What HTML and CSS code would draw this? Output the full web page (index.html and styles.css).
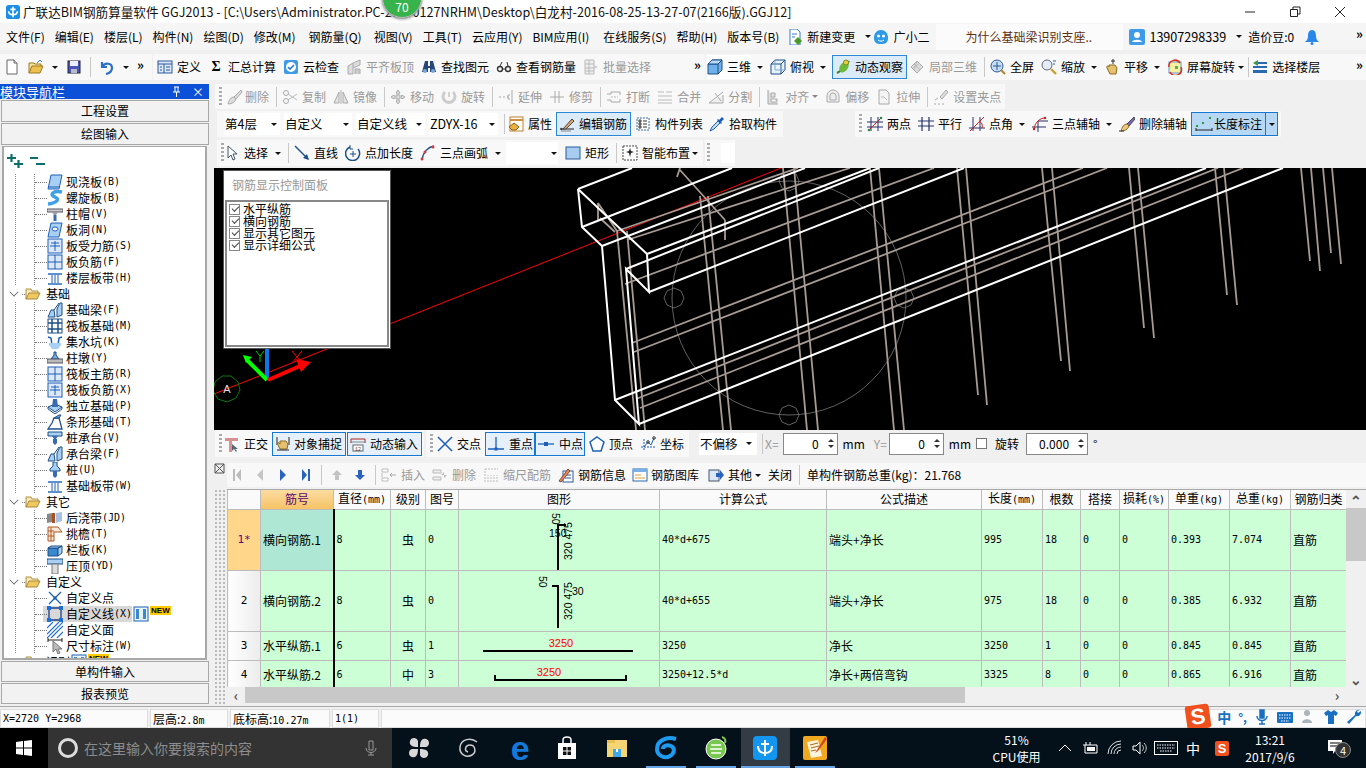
FILE: index.html
```html
<!DOCTYPE html>
<html lang="zh-CN">
<head>
<meta charset="utf-8">
<title>广联达BIM钢筋算量软件 GGJ2013</title>
<link rel="stylesheet" href="styles.css">
</head>
<body>
<svg class="defs" aria-hidden="true">
<symbol id="app" viewBox="0 0 16 16"><rect width="16" height="16" rx="3" fill="#1b8fe8"/><path d="M8 2v12M3 7c0 3 2 4 5 4s5-1 5-4M5 5h6" fill="none" stroke="#fff" stroke-width="1.8"/></symbol>
<symbol id="new" viewBox="0 0 16 16"><path d="M3 1h7l3 3v11H3z" fill="#fff" stroke="#666"/><path d="M10 1v3h3" fill="#ddd" stroke="#666"/></symbol>
<symbol id="open" viewBox="0 0 16 16"><path d="M1 14V4h5l1 1h6v2" fill="#f5e0a0" stroke="#9a7a20"/><path d="M1 14l3-7h11l-3 7z" fill="#edc050" stroke="#9a7a20"/><path d="M9 4l3-3 2 2" fill="none" stroke="#3a7ac8"/></symbol>
<symbol id="save" viewBox="0 0 16 16"><rect x="2" y="2" width="12" height="12" fill="#4a55b8" stroke="#223"/><rect x="4" y="2" width="8" height="5" fill="#eef"/><rect x="5" y="10" width="6" height="4" fill="#bbc"/></symbol>
<symbol id="undo" viewBox="0 0 16 16"><path d="M3 3v5h5M3 8c3-5 10-4 10 1 0 3-2 5-6 6" fill="none" stroke="#2a6fc8" stroke-width="2.2"/></symbol>
<symbol id="def" viewBox="0 0 16 16"><rect x="1" y="2" width="14" height="12" fill="#dce8f8" stroke="#2a5a98"/><path d="M1 5h14M7 5v9M3 8h2M3 11h2M9 8h4M9 11h4" stroke="#2a5a98" fill="none"/></symbol>
<symbol id="cloud" viewBox="0 0 16 16"><rect x="1" y="1" width="14" height="14" rx="2" fill="#3f9be8"/><circle cx="8" cy="8" r="5" fill="#fff"/><path d="M5 8l2 2 4-4" fill="none" stroke="#2a7cd0" stroke-width="1.6"/></symbol>
<symbol id="flush" viewBox="0 0 16 16"><path d="M2 15V7l5-3v11zM7 4l7-3v5l-7 3" fill="#ddd" stroke="#aaa"/><path d="M9 15v-5h5v5" fill="#ccc" stroke="#aaa"/></symbol>
<symbol id="bino" viewBox="0 0 16 16"><path d="M4 2h3v5h2V2h3l3 11H9V9H7v4H1z" fill="#27467a"/><circle cx="4" cy="12" r="2" fill="#7aa8e0"/><circle cx="12" cy="12" r="2" fill="#7aa8e0"/></symbol>
<symbol id="glass" viewBox="0 0 16 16"><circle cx="4" cy="10" r="2.5" fill="none" stroke="#333" stroke-width="1.4"/><circle cx="12" cy="10" r="2.5" fill="none" stroke="#333" stroke-width="1.4"/><path d="M6.500 10h3M4 7l2-4M12 7l-1-4" stroke="#333" fill="none"/></symbol>
<symbol id="batch" viewBox="0 0 16 16"><path d="M2 1h9v14H2zM2 5h9M2 9h9M2 12h9M6 1v14" fill="#eee" stroke="#bbb"/><path d="M11 6l4 2-4 2z" fill="#ccc"/></symbol>
<symbol id="cube" viewBox="0 0 16 16"><path d="M1 5l4-4h10v10l-4 4H1z" fill="#6fb0e8" stroke="#1d4f88"/><path d="M1 5h10v10M11 5l4-4" fill="none" stroke="#1d4f88"/><path d="M1 5l4-4h10l-4 4z" fill="#b8daf5" stroke="#1d4f88"/></symbol>
<symbol id="top" viewBox="0 0 16 16"><path d="M1 5l4-4h10v10l-4 4H1z" fill="#eaf4fc" stroke="#1d4f88"/><path d="M1 5h10v10M11 5l4-4" fill="none" stroke="#1d4f88"/><path d="M5 1v10h10" fill="none" stroke="#7aa8d8"/></symbol>
<symbol id="orbit" viewBox="0 0 16 16"><path d="M2 14C6 12 12 7 14 2" fill="none" stroke="#2a8a3a" stroke-width="2"/><ellipse cx="9" cy="8" rx="4" ry="6" fill="#6fba38" transform="rotate(35 9 8)"/><circle cx="11" cy="3.500" r="2.500" fill="#e8d040" stroke="#7a8a20"/></symbol>
<symbol id="local" viewBox="0 0 16 16"><path d="M2 8l6-6 6 6-6 6z" fill="#ddd" stroke="#aaa"/><path d="M5 5l6 6M8 2l-3 9M4 9l7-5" stroke="#bbb" fill="none"/></symbol>
<symbol id="zoomall" viewBox="0 0 16 16"><circle cx="7" cy="7" r="6" fill="#c8dcf4" stroke="#2a5a98"/><path d="M7 3v8M3 7h8" stroke="#2a5a98" fill="none"/><path d="M11 11l4 4" stroke="#b08030" stroke-width="2"/></symbol>
<symbol id="zoom" viewBox="0 0 16 16"><circle cx="6" cy="6" r="5" fill="#e4eef8" stroke="#667"/><path d="M10 10l5 5" stroke="#c8a030" stroke-width="2.400"/><path d="M12 2h3M12 5h2" stroke="#2a5a98"/></symbol>
<symbol id="pan" viewBox="0 0 16 16"><path d="M3 9c-1-2 1-3 2-1V6h6l2 3-1 6H6z" fill="#e4c070" stroke="#8a6a20"/><path d="M9 0v5M7 2h4" stroke="#333" fill="none"/></symbol>
<symbol id="rot" viewBox="0 0 16 16"><rect x="2" y="3" width="12" height="11" fill="#f8f0a0" stroke="#5a9ad8"/><path d="M2 8a6 6 0 0 1 11-4M14 8a6 6 0 0 1-11 5" fill="none" stroke="#d83020" stroke-width="1.500"/><rect x="8" y="7" width="3" height="3" fill="#58b058"/></symbol>
<symbol id="layer" viewBox="0 0 16 16"><path d="M6 3h9v2H6zM1 7h14v2H1zM1 11h14v3H1z" fill="#2a6ab0"/><path d="M1 4l5-3v6z" fill="#3a9a48"/></symbol>
<symbol id="newchg" viewBox="0 0 16 16"><path d="M3 0h7l3 3v13H3z" fill="#fff" stroke="#3a7ac8"/><path d="M5 5h5M5 8h3" stroke="#3a7ac8"/><path d="M11 8l4 4-4 4-4-4z" fill="#4a9a28"/></symbol>
<symbol id="gxe" viewBox="0 0 16 16"><path d="M1 9c0-5 3-8 7-8s7 3 7 8-3 6-7 6-7-1-7-6z" fill="#2c9ae6"/><circle cx="5.500" cy="7" r="1.500" fill="#fff"/><circle cx="10.500" cy="7" r="1.500" fill="#fff"/><path d="M5 11c2 1.500 4 1.500 6 0" stroke="#fff" fill="none"/></symbol>
<symbol id="user" viewBox="0 0 16 16"><rect width="16" height="16" rx="2" fill="#3f9be8"/><circle cx="8" cy="6" r="3" fill="#fff"/><path d="M3 13c1-3 9-3 10 0z" fill="#fff"/></symbol>
<symbol id="bell" viewBox="0 0 16 16"><path d="M8 1c3 0 4 3 4 6s1 4 3 6H1c2-2 3-3 3-6s1-6 4-6z" fill="#2a86e8"/><circle cx="8" cy="14.500" r="1.500" fill="#2a86e8"/></symbol>
<symbol id="g-del" viewBox="0 0 16 16"><path d="M14 1L7 8l2 2 6-7zM7 8c-3 0-5 3-6 7 4 0 7-2 8-5z" fill="#ddd" stroke="#aaa"/></symbol>
<symbol id="g-copy" viewBox="0 0 16 16"><circle cx="4" cy="4" r="2.500" fill="none" stroke="#aaa"/><circle cx="4" cy="12" r="2.500" fill="none" stroke="#aaa"/><path d="M6 5l9 6M6 11l9-6" stroke="#bbb"/></symbol>
<symbol id="g-mir" viewBox="0 0 16 16"><path d="M8 1v14M6 3L1 14h5zM10 3l5 11h-5z" fill="#e4e4e4" stroke="#aaa"/></symbol>
<symbol id="g-move" viewBox="0 0 16 16"><path d="M8 1l2 3H9v3h3V6l3 2-3 2V9H9v3h1l-2 3-2-3h1V9H4v1L1 8l3-2v1h3V4H6z" fill="#ddd" stroke="#aaa"/></symbol>
<symbol id="g-rot" viewBox="0 0 16 16"><path d="M4 3a6 6 0 1 0 8 0" fill="none" stroke="#ccc" stroke-width="3"/><path d="M8 3v5" stroke="#aaa"/></symbol>
<symbol id="g-ext" viewBox="0 0 16 16"><path d="M1 8h2M5 8h2M9 8h2M14 1v14M12 6h-2v4h2" fill="none" stroke="#aaa"/></symbol>
<symbol id="g-trim" viewBox="0 0 16 16"><path d="M1 8h14M6 2v12M10 2v12" fill="none" stroke="#aaa"/></symbol>
<symbol id="g-brk" viewBox="0 0 16 16"><path d="M1 5h4V3h9v3M1 11h4v2h9v-3" fill="none" stroke="#aaa"/><path d="M5 8h7" stroke="#bbb" stroke-dasharray="2 1"/></symbol>
<symbol id="g-mrg" viewBox="0 0 16 16"><path d="M1 3h6M9 3h6M1 7h14M1 11h14M1 14h14" fill="none" stroke="#bbb"/></symbol>
<symbol id="g-split" viewBox="0 0 16 16"><path d="M1 14L15 3M1 14h14V6" fill="#eee" stroke="#aaa"/><path d="M7 4l6 8" stroke="#aaa"/></symbol>
<symbol id="g-align" viewBox="0 0 16 16"><path d="M3 1v14h10M6 4h4v4H6zM6 10h6v3H6z" fill="#ddd" stroke="#aaa"/></symbol>
<symbol id="g-off" viewBox="0 0 16 16"><path d="M2 13V7a6 6 0 0 1 12 0v6zM5 11V7a3 3 0 0 1 6 0v4z" fill="#eee" stroke="#aaa"/></symbol>
<symbol id="g-str" viewBox="0 0 16 16"><path d="M3 1h7l3 3v11H3z" fill="#f4f4f4" stroke="#aaa"/><path d="M5 8h3l3 3" fill="none" stroke="#bbb"/></symbol>
<symbol id="g-grip" viewBox="0 0 16 16"><path d="M13 1l-6 7 2 2 6-7z" fill="#ddd" stroke="#aaa"/><path d="M1 15h2M5 15h2M9 15h2M2 11l3-2" stroke="#aaa"/></symbol>
<symbol id="attr" viewBox="0 0 16 16"><rect x="2" y="1" width="13" height="14" fill="#fff" stroke="#c08030"/><path d="M2 4h13" stroke="#d09040" stroke-width="2"/><path d="M1 11l5-4 5 4-3 3H4z" fill="#e8b040" stroke="#906010"/></symbol>
<symbol id="edit" viewBox="0 0 16 16"><path d="M1 13h14" stroke="#222"/><path d="M4 13l9-10 2 2-8 8z" fill="#e0a868" stroke="#444"/><circle cx="2.500" cy="13" r="1.200" fill="#444"/><path d="M2 15h10" stroke="#888"/></symbol>
<symbol id="list" viewBox="0 0 16 16"><path d="M2 2h12v12H2z" fill="#fff" stroke="#3a6aa8" stroke-dasharray="2 1"/><path d="M4 4h2v2H4zM4 7h2v2H4zM4 10h2v2H4zM8 5h4M8 8h4M8 11h4" stroke="#333" fill="none"/></symbol>
<symbol id="pick" viewBox="0 0 16 16"><path d="M1 15l2-4 6-6 2 2-6 6z" fill="#bfe0f8" stroke="#1d5fb8"/><path d="M8 4l4 4 1-1-1-1 3-3-2-2-3 3-1-1z" fill="#1d5fb8"/></symbol>
<symbol id="two" viewBox="0 0 16 16"><path d="M4 1v14M11 1v14M0 6h16M0 11h16" stroke="#26306a" fill="none"/><path d="M1 15L15 1" stroke="#c02020"/><circle cx="2" cy="14" r="1.300" fill="#2a8a3a"/><circle cx="14" cy="2" r="1.300" fill="#2a8a3a"/></symbol>
<symbol id="para" viewBox="0 0 16 16"><path d="M4 1v14M11 1v14M0 5h16M0 10h16" stroke="#26306a" fill="none" stroke-width="1.200"/></symbol>
<symbol id="ang" viewBox="0 0 16 16"><path d="M4 1v14M11 1v14M0 12h16" stroke="#26306a" fill="none"/><path d="M1 15L15 1" stroke="#c02020"/><path d="M10 5a6 6 0 0 1 3 7" stroke="#c02020" fill="none"/></symbol>
<symbol id="arc3" viewBox="0 0 16 16"><path d="M6 16V5h10M0 11h14" stroke="#26306a" fill="none"/><path d="M2 13C3 6 8 2 13 2" stroke="#c02020" fill="none"/><circle cx="2" cy="13" r="1.200" fill="#c02020"/><circle cx="13" cy="2" r="1.200" fill="#c02020"/></symbol>
<symbol id="delax" viewBox="0 0 16 16"><path d="M15 1L8 8l2 2 6-7z" fill="#7a68c8" stroke="#444"/><path d="M8 8c-3 0-5 3-6 7 4 0 7-2 8-5z" fill="#f0c880" stroke="#8a6a20"/><path d="M0 15h5" stroke="#333"/></symbol>
<symbol id="dim" viewBox="0 0 18 16"><path d="M1 12v3M17 12v3M1 14h16" stroke="#222" fill="none"/><rect x="1" y="9" width="2" height="2" fill="#2a9a3a"/><rect x="7" y="6" width="2" height="2" fill="#2a9a3a"/><rect x="14" y="1" width="2" height="2" fill="#2a9a3a"/></symbol>
<symbol id="cur" viewBox="0 0 16 16"><path d="M4 1v12l3-3 2 5 2-1-2-5h4z" fill="#fff" stroke="#456"/></symbol>
<symbol id="line" viewBox="0 0 16 16"><path d="M1 1l13 13" stroke="#1d4f88" stroke-width="1.400"/><path d="M15 15l-6-2 4-4z" fill="#1d4f88"/></symbol>
<symbol id="addl" viewBox="0 0 16 16"><path d="M5 2a7 7 0 1 0 8 2" fill="none" stroke="#1d4f88" stroke-width="1.500"/><path d="M5 0v4h3" fill="none" stroke="#1d4f88"/><path d="M8 6v6M5 9h6" stroke="#1d4f88"/></symbol>
<symbol id="arc" viewBox="0 0 16 16"><path d="M2 15C3 7 8 2 14 1" fill="none" stroke="#1d4f88" stroke-width="1.400"/><circle cx="2" cy="14" r="1.500" fill="#d04040"/><circle cx="5" cy="7" r="1.500" fill="#d04040"/><circle cx="13" cy="2" r="1.500" fill="#d04040"/></symbol>
<symbol id="rect" viewBox="0 0 16 16"><rect x="1" y="2" width="14" height="12" fill="#a8ccf0" stroke="#2a5a98"/></symbol>
<symbol id="smart" viewBox="0 0 16 16"><rect x="1" y="1" width="14" height="14" fill="#fff" stroke="#444" stroke-dasharray="2 1"/><path d="M8 3l1 3 3 1-3 1-1 4-1-4-3-1 3-1z" fill="#222"/></symbol>
<symbol id="ortho" viewBox="0 0 16 16"><path d="M1 2h13v3H8v11H5V5H1z" fill="#d89090"/><path d="M8 8v7l2-2 2 3 1-1-2-2h3z" fill="#567"/></symbol>
<symbol id="osnap" viewBox="0 0 16 16"><path d="M2 1v8M14 1v8" stroke="#222"/><path d="M3 9c-1-3 1-3 2-1V5h6l2 3-1 5H5z" fill="#e4c070" stroke="#8a6a20"/><path d="M2 14h12" stroke="#222"/></symbol>
<symbol id="dyn" viewBox="0 0 16 16"><path d="M1 3h14M1 3v4M15 3v4" stroke="#b02020" fill="none"/><path d="M0 6h16" stroke="#888"/><rect x="3" y="9" width="10" height="6" fill="#fff" stroke="#666"/><text x="8" y="14.500" class="tiny">12</text></symbol>
<symbol id="cross" viewBox="0 0 16 16"><path d="M1 1l14 14M15 1L1 15" stroke="#1d5fb8" stroke-width="1.500"/></symbol>
<symbol id="perp" viewBox="0 0 16 16"><path d="M8 1v12M0 13h16" stroke="#1d5fb8" stroke-width="1.300"/><rect x="6.500" y="11.500" width="3" height="3" fill="#1d5fb8"/></symbol>
<symbol id="midp" viewBox="0 0 16 16"><path d="M0 8h16" stroke="#1d5fb8" stroke-width="1.300"/><rect x="6" y="6" width="4" height="4" fill="#1d5fb8"/></symbol>
<symbol id="vert" viewBox="0 0 16 16"><path d="M8 1l7 5-3 9H4L1 6z" fill="#fff" stroke="#1d5fb8" stroke-width="1.500"/></symbol>
<symbol id="coord" viewBox="0 0 16 16"><path d="M4 14V2M1 11h14" stroke="#1d5fb8" stroke-dasharray="2 1" fill="none"/><path d="M4 11l4-5 3 3 3-7" stroke="#1d5fb8" fill="none"/><circle cx="14" cy="2" r="1.300" fill="none" stroke="#333"/><circle cx="8" cy="6" r="1.300" fill="none" stroke="#333"/></symbol>
<symbol id="first" viewBox="0 0 16 16"><path d="M4 2h2v12H4zM12 2L7 8l5 6z" fill="#bbb"/></symbol>
<symbol id="prev" viewBox="0 0 16 16"><path d="M11 2L5 8l6 6z" fill="#c4c4c4"/></symbol>
<symbol id="next" viewBox="0 0 16 16"><path d="M5 2l6 6-6 6z" fill="#2a62c0"/></symbol>
<symbol id="last" viewBox="0 0 16 16"><path d="M10 2h2v12h-2zM4 2l5 6-5 6z" fill="#2a62c0"/></symbol>
<symbol id="up" viewBox="0 0 16 16"><path d="M8 3l5 5h-3v5H6V8H3z" fill="#c4c4c4"/></symbol>
<symbol id="down" viewBox="0 0 16 16"><path d="M6 3h4v5h3l-5 5-5-5h3z" fill="#2a62c0"/></symbol>
<symbol id="ins" viewBox="0 0 16 16"><path d="M1 2h6v3H1zM1 11h6v3H1zM1 6v4" fill="#fff" stroke="#bbb"/><path d="M15 8H9l2-2M9 8l2 2" stroke="#aaa" fill="none"/></symbol>
<symbol id="del2" viewBox="0 0 16 16"><path d="M1 3h8v3H1zM1 10h8v3H1z" fill="#eee" stroke="#bbb"/><path d="M15 8H9l3-3v6z" fill="#bbb"/></symbol>
<symbol id="scale" viewBox="0 0 16 16"><path d="M2 15V2M2 2h13M5 15V8M8 15V8M11 15V8M14 15V8" stroke="#bbb" stroke-dasharray="2 1" fill="none"/></symbol>
<symbol id="info" viewBox="0 0 16 16"><rect x="5" y="4" width="10" height="11" fill="#fff" stroke="#2a5a98"/><path d="M7 8h6M7 11h6" stroke="#2a5a98"/><path d="M1 14l9-12 2 2-9 11z" fill="#e09050" stroke="#844"/></symbol>
<symbol id="lib" viewBox="0 0 16 16"><rect x="1" y="2" width="14" height="12" fill="#fff" stroke="#2a6ab0"/><path d="M1 2h14v3H1z" fill="#7ab0e8"/><path d="M3 8h6M3 11h10" stroke="#d8a030"/></symbol>
<symbol id="other" viewBox="0 0 16 16"><rect x="1" y="3" width="10" height="11" fill="#dce8f8" stroke="#456"/><path d="M8 6h4V3l4 5-4 5v-3H8z" fill="#2a62c0"/></symbol>
<symbol id="t-slab" viewBox="0 0 16 16"><path d="M4 1h11l-3 14H1z" fill="#a8d0f4" stroke="#1d5fb8"/><path d="M1 13h11" stroke="#1d5fb8"/></symbol>
<symbol id="t-spiral" viewBox="0 0 16 16"><path d="M15 2C6 0 2 5 8 7c5 2 2 6-7 7" fill="none" stroke="#3fa0e8" stroke-width="3.500"/></symbol>
<symbol id="t-cap" viewBox="0 0 16 16"><path d="M0 3h16v3H0z" fill="#ccc" stroke="#556"/><path d="M5 6h6l-2 3H7z" fill="#99a"/><path d="M6.500 9h3v6h-3z" fill="#3a6ab0"/></symbol>
<symbol id="t-hole" viewBox="0 0 16 16"><path d="M4 1h11l-3 14H1z" fill="#a8d0f4" stroke="#1d5fb8"/><ellipse cx="8" cy="7" rx="3" ry="2" fill="#fff" stroke="#1d5fb8"/></symbol>
<symbol id="t-grid" viewBox="0 0 16 16"><rect x="1" y="1" width="14" height="14" fill="#dce8f8" stroke="#1d5fb8"/><path d="M1 8h14M8 1v14" stroke="#1d5fb8"/></symbol>
<symbol id="t-grid2" viewBox="0 0 16 16"><rect x="1" y="1" width="14" height="14" fill="#dce8f8" stroke="#1d5fb8"/><path d="M3 8h10M8 3v10M4 5h8" stroke="#1d5fb8"/></symbol>
<symbol id="t-band" viewBox="0 0 16 16"><path d="M1 3h14v2H1zM1 13h14v2H1z" fill="#5a90d0"/><path d="M5 5v8M11 5v8M8 5v8" stroke="#1d5fb8"/></symbol>
<symbol id="t-beam" viewBox="0 0 16 16"><path d="M1 15l3-7h3l1 7zM10 15V7l3-6h2v12z" fill="#a8d0f4" stroke="#1d4f88"/><path d="M7 8l5-7" stroke="#1d4f88"/></symbol>
<symbol id="t-raft" viewBox="0 0 16 16"><rect x="1" y="1" width="14" height="14" fill="#fff" stroke="#1d4f88"/><path d="M1 5h14M1 11h14M5 1v14M11 1v14" stroke="#1d4f88" stroke-width="1.500"/></symbol>
<symbol id="t-pit" viewBox="0 0 16 16"><path d="M1 3l3 1 1 7h6l1-7 3-1" fill="none" stroke="#1d5fb8" stroke-width="1.500"/><path d="M2 9h12v2l-3 4H5L2 11z" fill="#a8d0f4"/></symbol>
<symbol id="t-pier" viewBox="0 0 16 16"><path d="M7 2h2v3l3 4H4l3-4z" fill="#7aa8e0" stroke="#1d4f88"/><path d="M0 9h16v4H0z" fill="#bbb" stroke="#556"/></symbol>
<symbol id="t-iso" viewBox="0 0 16 16"><path d="M1 9l7-3 7 3-7 5z" fill="#a8d0f4" stroke="#1d4f88"/><path d="M1 9v2l7 5 7-5V9" fill="none" stroke="#1d4f88"/><path d="M6 1h4l1 8H5z" fill="#3a6ab0"/></symbol>
<symbol id="t-strip" viewBox="0 0 16 16"><path d="M1 15l4-6 2-5h5l3 11z" fill="#fff" stroke="#1d4f88" stroke-width="1.300"/><path d="M7 4l5-3h2l-2 3z" fill="#7aa8e0" stroke="#1d4f88"/></symbol>
<symbol id="t-pile" viewBox="0 0 16 16"><path d="M1 2h14v4H1z" fill="#a8d0f4" stroke="#1d4f88"/><path d="M5 6h6L9 9H7z" fill="#3a6ab0"/><path d="M6 9h4v4l-2 2-2-2z" fill="#3a6ab0"/></symbol>
<symbol id="t-pile2" viewBox="0 0 16 16"><path d="M6 0h4v4l3 3v2H3V7l3-3z" fill="#a8d0f4" stroke="#1d4f88"/><path d="M6 9h4v5l-2 2-2-2z" fill="#3a6ab0"/></symbol>
<symbol id="t-jd" viewBox="0 0 16 16"><path d="M0 4l5-1v9l-5 1z" fill="#888"/><path d="M5 3h3v10H5z" fill="#a85020"/><path d="M9 3l6-1v9l-6 2z" fill="#a8c0e8"/></symbol>
<symbol id="t-eave" viewBox="0 0 16 16"><path d="M1 1h10l4 5H7v9H1z" fill="#f8e8d8" stroke="#b05820"/><path d="M1 5h6M1 10h6M4 1v14" stroke="#b05820"/></symbol>
<symbol id="t-rail" viewBox="0 0 16 16"><path d="M1 6h10v8H1z" fill="#3a88d0" stroke="#1d4f88"/><path d="M1 6l3-2h11l-4 2zM11 6l4-2v7l-4 3z" fill="#a8d0f4" stroke="#1d4f88"/></symbol>
<symbol id="t-top" viewBox="0 0 16 16"><path d="M0 1h16v5H0z" fill="#a8d0f4" stroke="#1d4f88"/><path d="M5 6h6v10H5z" fill="#ddd" stroke="#777"/></symbol>
<symbol id="t-pt" viewBox="0 0 16 16"><path d="M2 2l12 12M14 2L2 14" stroke="#1d5fb8" stroke-width="1.300"/><rect x="6.500" y="6.500" width="3" height="3" fill="#1d5fb8"/></symbol>
<symbol id="t-ln" viewBox="0 0 16 16"><path d="M2 2h12v12H2z" fill="none" stroke="#1d3f88" stroke-width="1.300"/><path d="M0 0h4v4H0zM12 0h4v4h-4zM0 12h4v4H0zM12 12h4v4h-4z" fill="#1d6fd8"/></symbol>
<symbol id="t-hatch" viewBox="0 0 16 16"><path d="M0 6L6 0M0 12L12 0M0 16L16 0M4 16L16 4M10 16l6-6" stroke="#1d6fd8" stroke-width="1.200"/></symbol>
<symbol id="t-dim" viewBox="0 0 16 16"><path d="M1 0v4M15 0v4M1 2h14" stroke="#222" fill="none"/><path d="M6 3v11l3-3 2 5 2-1-2-4h4z" fill="#bbb" stroke="#777"/></symbol>
<symbol id="t-tbl" viewBox="0 0 16 16"><rect x="1" y="1" width="14" height="14" fill="#eaf4fc" stroke="#1d5fb8"/><path d="M3 3h3v10H3zM10 3h3v10h-3z" fill="#3a88d0"/></symbol>
<symbol id="folder" viewBox="0 0 16 16"><path d="M1 13V3h5l1 2h6v2" fill="#f8e8b8" stroke="#b09040"/><path d="M1 13l3-6h11l-3 6z" fill="#f0c860" stroke="#a88838"/></symbol>
</svg>

<div class="app">
  <header class="title">
    <svg class="i appicon"><use href="#app"/></svg>
    <span class="ttxt">广联达BIM钢筋算量软件 GGJ2013 - [C:\Users\Administrator.PC-20170127NRHM\Desktop\白龙村-2016-08-25-13-27-07(2166版).GGJ12]</span>
    <div class="badge">70</div>
    <div class="win">
      <svg class="wi"><path d="M3 8h10" stroke="#222"/></svg>
      <svg class="wi"><path d="M3.500 5.500h7v7h-7zM6 5V3h7v7h-2" fill="none" stroke="#222"/></svg>
      <svg class="wi"><path d="M3 3l10 10M13 3L3 13" stroke="#222"/></svg>
    </div>
  </header>

  <nav class="menu">
    <span>文件(F)</span><span>编辑(E)</span><span>楼层(L)</span><span>构件(N)</span><span>绘图(D)</span><span>修改(M)</span><span class="g3">钢筋量(Q)</span><span class="g2">视图(V)</span><span>工具(T)</span><span>云应用(Y)</span><span>BIM应用(I)</span><span class="g4">在线服务(S)</span><span>帮助(H)</span><span>版本号(B)</span>
    <div class="it nc"><svg class="i"><use href="#newchg"/></svg>新建变更</div><i class="ar"></i>
    <div class="it gxe"><svg class="i"><use href="#gxe"/></svg>广小二</div>
    <div class="news">为什么基础梁识别支座..</div>
    <div class="it acct"><svg class="i"><use href="#user"/></svg>13907298339</div><i class="ar"></i>
    <span class="zjd">造价豆:0</span>
    <svg class="i"><use href="#bell"/></svg>
    <span class="more end">»</span>
  </nav>

  <div class="row1">
    <div class="blk b1">
      <svg class="i"><use href="#new"/></svg>
      <svg class="i"><use href="#open"/></svg><i class="ar"></i>
      <svg class="i"><use href="#save"/></svg>
      <i class="sep"></i>
      <svg class="i"><use href="#undo"/></svg><i class="ar"></i>
      <span class="more">»</span>
    </div>
    <div class="blk b2">
      <div class="it"><svg class="i"><use href="#def"/></svg>定义</div>
      <div class="it"><span class="sig">Σ</span>汇总计算</div>
      <div class="it"><svg class="i"><use href="#cloud"/></svg>云检查</div>
      <div class="it dis"><svg class="i"><use href="#flush"/></svg>平齐板顶</div>
      <div class="it"><svg class="i"><use href="#bino"/></svg>查找图元</div>
      <div class="it"><svg class="i"><use href="#glass"/></svg>查看钢筋量</div>
      <div class="it dis"><svg class="i"><use href="#batch"/></svg>批量选择</div>
      <span class="more end2">»</span>
    </div>
    <div class="blk b3">
      <div class="it wh"><svg class="i"><use href="#cube"/></svg>三维</div><i class="ar"></i>
      <div class="it"><svg class="i"><use href="#top"/></svg>俯视</div><i class="ar"></i>
      <div class="it on"><svg class="i"><use href="#orbit"/></svg>动态观察</div>
      <div class="it dis"><svg class="i"><use href="#local"/></svg>局部三维</div>
      <i class="sep"></i>
      <div class="it"><svg class="i"><use href="#zoomall"/></svg>全屏</div>
      <div class="it"><svg class="i"><use href="#zoom"/></svg>缩放</div><i class="ar"></i>
      <div class="it"><svg class="i"><use href="#pan"/></svg>平移</div><i class="ar"></i>
      <div class="it"><svg class="i"><use href="#rot"/></svg>屏幕旋转</div><i class="ar tight"></i>
      <i class="sep"></i>
      <div class="it"><svg class="i"><use href="#layer"/></svg>选择楼层</div>
      <span class="more end">»</span>
    </div>
  </div>

  <div class="main">
    <aside class="left">
      <div class="ltitle"><span>模块导航栏</span><span class="lctl"><svg class="pin"><path d="M3 1h5M4 1v5M7 1v5M2 6h7M5.500 6v5" fill="none" stroke="#fff"/></svg><span>×</span></span></div>
      <div class="lbtn">工程设置</div>
      <div class="lbtn">绘图输入</div>
      <div class="tree">
        <div class="expand">
          <svg class="pmi"><path d="M0 4h9M4.500 0v8M7 10h9M11.500 6v8" fill="none" stroke="#0e6e6e" stroke-width="2.200"/></svg>
          <svg class="pmi"><path d="M0 4h8M6 10h9" fill="none" stroke="#0e6e6e" stroke-width="2.200"/></svg>
        </div>
        <div class="tlist">
          <div class="n"><i class="ln"></i><svg class="i"><use href="#t-slab"/></svg>现浇板<b class="m">(B)</b></div>
          <div class="n"><i class="ln"></i><svg class="i"><use href="#t-spiral"/></svg>螺旋板<b class="m">(B)</b></div>
          <div class="n"><i class="ln"></i><svg class="i"><use href="#t-cap"/></svg>柱帽<b class="m">(V)</b></div>
          <div class="n"><i class="ln"></i><svg class="i"><use href="#t-hole"/></svg>板洞<b class="m">(N)</b></div>
          <div class="n"><i class="ln"></i><svg class="i"><use href="#t-grid2"/></svg>板受力筋<b class="m">(S)</b></div>
          <div class="n"><i class="ln"></i><svg class="i"><use href="#t-grid"/></svg>板负筋<b class="m">(F)</b></div>
          <div class="n"><i class="ln"></i><svg class="i"><use href="#t-band"/></svg>楼层板带<b class="m">(H)</b></div>
          <div class="g"><i class="chev"></i><i class="ln2"></i><svg class="i"><use href="#folder"/></svg>基础</div>
          <div class="n"><i class="ln"></i><svg class="i"><use href="#t-beam"/></svg>基础梁<b class="m">(F)</b></div>
          <div class="n"><i class="ln"></i><svg class="i"><use href="#t-raft"/></svg>筏板基础<b class="m">(M)</b></div>
          <div class="n"><i class="ln"></i><svg class="i"><use href="#t-pit"/></svg>集水坑<b class="m">(K)</b></div>
          <div class="n"><i class="ln"></i><svg class="i"><use href="#t-pier"/></svg>柱墩<b class="m">(Y)</b></div>
          <div class="n"><i class="ln"></i><svg class="i"><use href="#t-grid"/></svg>筏板主筋<b class="m">(R)</b></div>
          <div class="n"><i class="ln"></i><svg class="i"><use href="#t-grid2"/></svg>筏板负筋<b class="m">(X)</b></div>
          <div class="n"><i class="ln"></i><svg class="i"><use href="#t-iso"/></svg>独立基础<b class="m">(P)</b></div>
          <div class="n"><i class="ln"></i><svg class="i"><use href="#t-strip"/></svg>条形基础<b class="m">(T)</b></div>
          <div class="n"><i class="ln"></i><svg class="i"><use href="#t-pile"/></svg>桩承台<b class="m">(V)</b></div>
          <div class="n"><i class="ln"></i><svg class="i"><use href="#t-beam"/></svg>承台梁<b class="m">(F)</b></div>
          <div class="n"><i class="ln"></i><svg class="i"><use href="#t-pile2"/></svg>桩<b class="m">(U)</b></div>
          <div class="n"><i class="ln"></i><svg class="i"><use href="#t-band"/></svg>基础板带<b class="m">(W)</b></div>
          <div class="g"><i class="chev"></i><i class="ln2"></i><svg class="i"><use href="#folder"/></svg>其它</div>
          <div class="n"><i class="ln"></i><svg class="i"><use href="#t-jd"/></svg>后浇带<b class="m">(JD)</b></div>
          <div class="n"><i class="ln"></i><svg class="i"><use href="#t-eave"/></svg>挑檐<b class="m">(T)</b></div>
          <div class="n"><i class="ln"></i><svg class="i"><use href="#t-rail"/></svg>栏板<b class="m">(K)</b></div>
          <div class="n"><i class="ln"></i><svg class="i"><use href="#t-top"/></svg>压顶<b class="m">(YD)</b></div>
          <div class="g"><i class="chev"></i><i class="ln2"></i><svg class="i"><use href="#folder"/></svg>自定义</div>
          <div class="n"><i class="ln"></i><svg class="i"><use href="#t-pt"/></svg>自定义点</div>
          <div class="n sel"><i class="ln"></i><svg class="i"><use href="#t-ln"/></svg>自定义线<b class="m">(X)</b><svg class="i tbl"><use href="#t-tbl"/></svg><em class="newb">NEW</em></div>
          <div class="n"><i class="ln"></i><svg class="i"><use href="#t-hatch"/></svg>自定义面</div>
          <div class="n"><i class="ln"></i><svg class="i"><use href="#t-dim"/></svg>尺寸标注<b class="m">(W)</b></div>
          <div class="g"><i class="chev none"></i><i class="ln2"></i><svg class="i"><use href="#folder"/></svg>识别<svg class="i tbl"><use href="#t-tbl"/></svg><em class="newb">NEW</em></div>
        </div>
        <div class="tscroll"><span class="sa">⌃</span><div class="tgap"></div><div class="tthumb"></div><span class="sa">⌄</span></div>
      </div>
      <div class="lbtn lb2">单构件输入</div>
      <div class="lbtn lb2">报表预览</div>
    </aside>

    <div class="rc">
      <div class="tr r2">
        <div class="blk bk2 dis">
          <i class="dots"></i>
          <div class="it first"><svg class="i"><use href="#g-del"/></svg>删除</div>
          <i class="sep"></i>
          <div class="it"><svg class="i"><use href="#g-copy"/></svg>复制</div>
          <div class="it"><svg class="i"><use href="#g-mir"/></svg>镜像</div>
          <i class="sep"></i>
          <div class="it"><svg class="i"><use href="#g-move"/></svg>移动</div>
          <div class="it"><svg class="i"><use href="#g-rot"/></svg>旋转</div>
          <i class="sep"></i>
          <div class="it"><svg class="i"><use href="#g-ext"/></svg>延伸</div>
          <div class="it"><svg class="i"><use href="#g-trim"/></svg>修剪</div>
          <i class="sep"></i>
          <div class="it"><svg class="i"><use href="#g-brk"/></svg>打断</div>
          <div class="it"><svg class="i"><use href="#g-mrg"/></svg>合并</div>
          <div class="it"><svg class="i"><use href="#g-split"/></svg>分割</div>
          <i class="sep"></i>
          <div class="it"><svg class="i"><use href="#g-align"/></svg>对齐</div><i class="ar tight ga"></i>
          <div class="it"><svg class="i"><use href="#g-off"/></svg>偏移</div>
          <div class="it"><svg class="i"><use href="#g-str"/></svg>拉伸</div>
          <i class="sep"></i>
          <div class="it"><svg class="i"><use href="#g-grip"/></svg>设置夹点</div>
        </div>
      </div>

      <div class="tr r3">
        <div class="blk bk3">
          <div class="cb c1">第4层<i class="ar"></i></div>
          <div class="cb c2">自定义<i class="ar"></i></div>
          <div class="cb c3">自定义线<i class="ar"></i></div>
          <div class="cb c4">ZDYX-16<i class="ar"></i></div>
          <i class="sep"></i>
          <div class="it"><svg class="i"><use href="#attr"/></svg>属性</div>
          <div class="it on"><svg class="i"><use href="#edit"/></svg>编辑钢筋</div>
          <div class="it"><svg class="i"><use href="#list"/></svg>构件列表</div>
          <div class="it pk"><svg class="i"><use href="#pick"/></svg>拾取构件</div>
        </div>
        <div class="blk bk4">
          <i class="dots"></i>
          <div class="it"><svg class="i"><use href="#two"/></svg>两点</div>
          <div class="it"><svg class="i"><use href="#para"/></svg>平行</div>
          <div class="it"><svg class="i"><use href="#ang"/></svg>点角</div><i class="ar"></i>
          <div class="it"><svg class="i"><use href="#arc3"/></svg>三点辅轴</div><i class="ar"></i>
          <div class="it"><svg class="i"><use href="#delax"/></svg>删除辅轴</div>
          <div class="split"><div class="it"><svg class="i dimi"><use href="#dim"/></svg>长度标注</div><span class="sp-ar"><i class="ar"></i></span></div>
        </div>
      </div>

      <div class="tr r4">
        <div class="blk bk5">
          <i class="dots"></i>
          <div class="it"><svg class="i"><use href="#cur"/></svg>选择</div><i class="ar"></i>
          <i class="sep"></i>
          <div class="it"><svg class="i"><use href="#line"/></svg>直线</div>
          <div class="it"><svg class="i"><use href="#addl"/></svg>点加长度</div>
          <div class="it"><svg class="i"><use href="#arc"/></svg>三点画弧</div><i class="ar"></i>
          <div class="cb c5"><i class="ar"></i></div>
          <div class="it"><svg class="i"><use href="#rect"/></svg>矩形</div>
          <i class="sep"></i>
          <div class="it"><svg class="i"><use href="#smart"/></svg>智能布置</div><i class="ar tight2"></i>
        </div>
        <div class="blk bk6"><i class="dots"></i><i class="wbx"></i></div>
      </div>

      <div class="cv">
        <svg class="scene" viewBox="214 168 1152 262">
          <g class="red"><path d="M214 394L781 168"/></g>
          <g class="thin">
            <circle cx="789" cy="298" r="117"/>
            <path d="M782 174l7-3 7 3 3 7-3 7-7 3-7-3-3-7zM667 291l7-3 7 3 3 7-3 7-7 3-7-3-3-7zM897 291l7-3 7 3 3 7-3 7-7 3-7-3-3-7zM782 408l7-3 7 3 3 7-3 7-7 3-7-3-3-7z"/>
          </g>
          <g class="gr">
            <path d="M617 231L636 430M627 231L645 430M700 196L723 430M708 196L731 430M783 168L807 430M794 168L818 430M870 168L894 430M879 168L904 430"/>
            <path d="M957 168L978 395M966 168L987 405M1042 168L1061 361M1052 168L1070 371M1129 168L1144 328M1138 168L1154 338M1215 168L1227 295M1224 168L1237 305M1301 168L1310 261M1311 168L1320 271M1323 168L1331 253M1332 168L1341 264"/>
            <path d="M617 231L798 168M627 240L850 168M625 284L934 168M632 343L1083 168M634 352L1107 168M636 399L1218 168M640 408L1243 168M677 177L680 168M598 203L617 231M598 203v18M600 218L615 232"/>
            <path d="M680 170L725 220M725 220V240"/>
          </g>
          <g class="wh">
            <path d="M578 189L632 168M582 227L732 168M602 246L805 168M647 254L870 168M626 269L879 168M649 292L964 168M615 400L1206 168M639 424L1283 168"/>
            <path d="M578 189L582 227L602 246L615 400L639 424L626 269L649 292L647 254L578 189"/>
          </g>
          <path class="ax-b" d="M267 380V346"/>
          <path class="ax-g" d="M267 380L247 360"/>
          <path class="ax-gh" d="M243 355l9 2-6 6z"/>
          <path class="ax-r" d="M268 380L300 366"/>
          <path class="ax-rh" d="M311 362l-15-3 5 13z"/>
          <path class="lab-g" d="M256 351l4 5 4-5M260 356v6"/>
          <path class="lab-r" d="M292 351l10 12M302 351l-10 12"/>
          <path class="circ" d="M222 376l9 0 7 6 2 8-4 8-9 4-9-3-5-8 2-9z"/>
          <text x="227" y="393" class="lbl-a">A</text>
        </svg>
        <div class="ctl">
          <div class="ctl-t">钢筋显示控制面板</div>
          <div class="ctl-b">
            <label class="ck"><i class="box"></i>水平纵筋</label>
            <label class="ck"><i class="box"></i>横向钢筋</label>
            <label class="ck"><i class="box"></i>显示其它图元</label>
            <label class="ck"><i class="box"></i>显示详细公式</label>
          </div>
        </div>
      </div>

      <div class="tr r5">
        <div class="blk bk7">
          <i class="dots"></i>
          <div class="it"><svg class="i"><use href="#ortho"/></svg>正交</div>
          <div class="it on on2"><svg class="i"><use href="#osnap"/></svg>对象捕捉</div>
          <div class="it on on2"><svg class="i"><use href="#dyn"/></svg>动态输入</div>
        </div>
        <div class="blk bk8">
          <i class="dots"></i>
          <div class="it"><svg class="i"><use href="#cross"/></svg>交点</div>
          <div class="it on on2 pp"><svg class="i"><use href="#perp"/></svg>重点</div>
          <div class="it on on2 pp"><svg class="i"><use href="#midp"/></svg>中点</div>
          <div class="it"><svg class="i"><use href="#vert"/></svg>顶点</div>
          <div class="it lastc"><svg class="i"><use href="#coord"/></svg>坐标</div>
        </div>
        <div class="blk bk9">
          <div class="cb c6">不偏移<i class="ar"></i></div>
          <i class="sep"></i>
          <span class="dtx">X=</span>
          <div class="spin sx">0<span class="sb"><i></i><i></i></span></div>
          <span>mm</span>
          <span class="dtx dy">Y=</span>
          <div class="spin">0<span class="sb"><i></i><i></i></span></div>
          <span>mm</span>
          <i class="chk"></i>
          <span>旋转</span>
          <div class="spin s2">0.000<span class="sb"><i></i><i></i></span></div>
          <span>°</span>
        </div>
      </div>

      <div class="tr r6">
        <svg class="closex"><path d="M1 1h9v9H1zM1 1l9 9M10 1l-9 9" fill="#eee" stroke="#555"/></svg>
        <div class="blk bk10">
          <svg class="i"><use href="#first"/></svg>
          <svg class="i"><use href="#prev"/></svg>
          <svg class="i"><use href="#next"/></svg>
          <svg class="i"><use href="#last"/></svg>
          <i class="sep"></i>
          <svg class="i"><use href="#up"/></svg>
          <svg class="i"><use href="#down"/></svg>
          <i class="sep"></i>
          <div class="it dis"><svg class="i"><use href="#ins"/></svg>插入</div>
          <div class="it dis"><svg class="i"><use href="#del2"/></svg>删除</div>
          <div class="it dis"><svg class="i"><use href="#scale"/></svg>缩尺配筋</div>
          <div class="it"><svg class="i"><use href="#info"/></svg>钢筋信息</div>
          <div class="it lb"><svg class="i"><use href="#lib"/></svg>钢筋图库</div>
          <div class="it ot"><svg class="i"><use href="#other"/></svg>其他</div><i class="ar tight"></i>
          <span>关闭</span>
          <i class="sep"></i>
          <span>单构件钢筋总重(kg)：21.768</span>
        </div>
      </div>

      <div class="dock">
        <div class="grip"></div>
        <div class="gridwrap">
          <div class="gridrow">
            <div class="tblclip">
              <table class="grid">
                <colgroup><col class="k0"><col class="k1"><col class="k2"><col class="k3"><col class="k4"><col class="k5"><col class="k6"><col class="k7"><col class="k8"><col class="k9"><col class="k10"><col class="k11"><col class="k12"><col class="k13"><col class="k14"></colgroup>
                <thead>
                  <tr><th></th><th class="act">筋号</th><th>直径<b class="m">(mm)</b></th><th>级别</th><th>图号</th><th>图形</th><th>计算公式</th><th>公式描述</th><th>长度<b class="m">(mm)</b></th><th>根数</th><th>搭接</th><th>损耗<b class="m">(%)</b></th><th>单重<b class="m">(kg)</b></th><th>总重<b class="m">(kg)</b></th><th class="clip">钢筋归类</th></tr>
                </thead>
                <tbody>
                  <tr class="tall">
                    <th class="rh cur">1*</th><td class="sel1">横向钢筋.1</td><td class="bl m">8</td><td class="ctr">虫</td><td class="m">0</td>
                    <td class="sh"><svg class="shape" viewBox="0 0 201 60"><path class="rb" d="M107 15H99v45"/><text class="sv" transform="translate(93 3) rotate(90)">50</text><text class="sh2" x="90" y="27">150</text><text class="sv" transform="translate(113 50) rotate(-90)">320 475</text></svg></td>
                    <td class="m">40*d+675</td><td>端头+净长</td><td class="m">995</td><td class="m">18</td><td class="m">0</td><td class="m">0</td><td class="m">0.393</td><td class="m">7.074</td><td>直筋</td>
                  </tr>
                  <tr class="tall">
                    <th class="rh">2</th><td>横向钢筋.2</td><td class="bl m">8</td><td class="ctr">虫</td><td class="m">0</td>
                    <td class="sh"><svg class="shape" viewBox="0 0 201 60"><path class="rb" d="M93 15h6v42"/><text class="sv" transform="translate(80 5) rotate(90)">50</text><text class="sv" transform="translate(113 49) rotate(-90)">320 475</text><text class="sh2" x="113" y="24">30</text></svg></td>
                    <td class="m">40*d+655</td><td>端头+净长</td><td class="m">975</td><td class="m">18</td><td class="m">0</td><td class="m">0</td><td class="m">0.385</td><td class="m">6.932</td><td>直筋</td>
                  </tr>
                  <tr class="mid">
                    <th class="rh">3</th><td>水平纵筋.1</td><td class="bl m">6</td><td class="ctr">虫</td><td class="m">1</td>
                    <td class="sh"><svg class="shape" viewBox="0 0 201 28"><path class="rb" d="M24 19h150"/><text class="sr" x="102" y="15">3250</text></svg></td>
                    <td class="m">3250</td><td>净长</td><td class="m">3250</td><td class="m">1</td><td class="m">0</td><td class="m">0</td><td class="m">0.845</td><td class="m">0.845</td><td>直筋</td>
                  </tr>
                  <tr class="mid">
                    <th class="rh">4</th><td>水平纵筋.2</td><td class="bl m">6</td><td class="ctr">中</td><td class="m">3</td>
                    <td class="sh"><svg class="shape" viewBox="0 0 201 28"><path class="rb" d="M36 14v5h131v-5"/><text class="sr" x="90" y="15">3250</text></svg></td>
                    <td class="m">3250+12.5*d</td><td>净长+两倍弯钩</td><td class="m">3325</td><td class="m">8</td><td class="m">0</td><td class="m">0</td><td class="m">0.865</td><td class="m">6.916</td><td>直筋</td>
                  </tr>
                </tbody>
              </table>
            </div>
            <div class="vs"><span class="sa">⌃</span><div class="vthumb"></div><div class="vgap"></div><span class="sa">⌄</span></div>
          </div>
          <div class="hs"><span class="hsa">‹</span><div class="hthumb"></div><div class="vgap"></div><span class="hsa">›</span></div>
        </div>
      </div>
    </div>
  </div>

  <footer class="status">
    <div class="st s-a">X=2720 Y=2968</div>
    <div class="st s-b">层高:<b class="m">2.8m</b></div>
    <div class="st s-c">底标高:<b class="m">10.27m</b></div>
    <div class="st s-d">1(1)</div>
    <div class="st s-e"></div>
    <div class="ime">
      <div class="sogou">S</div>
      <span class="ime-z">中</span><span class="ime-p">°,</span>
      <svg class="i"><path d="M6 1h4v8H6zM3 7c0 6 10 6 10 0M8 12v3M5 15h6" fill="none" stroke="#1a70c0" stroke-width="1.500"/><path d="M6 1h4v8H6z" fill="#1a70c0"/></svg>
      <svg class="i"><rect y="3" width="16" height="11" rx="1" fill="#1a70c0"/><path d="M2 6h12M2 9h12M4 12h8" stroke="#fff" stroke-dasharray="1.500 1"/></svg>
      <svg class="i"><circle cx="7" cy="4" r="3" fill="#aab4bc"/><path d="M2 14c0-5 10-5 10 0z" fill="#aab4bc"/></svg>
      <svg class="i"><path d="M5 1L1 4l2 3 2-1v9h6V6l2 1 2-3-4-3-3 2z" fill="#1a70c0"/></svg>
      <svg class="i"><path d="M14 1a4 4 0 0 0-5 5L1 13l2 2 7-8a4 4 0 0 0 5-5l-3 2-1-2z" fill="#1a70c0"/></svg>
    </div>
  </footer>

  <div class="taskbar">
    <div class="start"><svg class="win10" viewBox="0 0 16 16"><path d="M0 2l7-1v6.500H0zM8 1l8-1v7.500H8zM0 8.500h7V15l-7-1zM8 8.500h8V16l-8-1z" fill="#fff"/></svg></div>
    <div class="search">
      <i class="cortana"></i>
      <span class="stxt">在这里输入你要搜索的内容</span>
      <svg class="i mic"><path d="M6 1h4v9H6zM3 8c0 6 10 6 10 0M8 13v2M5 15h6" fill="none" stroke="#999"/></svg>
    </div>
    <div class="tapps">
      <div class="ta"><svg class="ti" viewBox="0 0 24 24"><path d="M11 11C5 11 2 9 3 5s7-4 8 0zM13 11c0-6 2-9 6-8s4 7 0 8zM13 13c6 0 9 2 8 6s-7 4-8 0zM11 13c0 6-2 9-6 8s-4-7 0-8z" fill="#d8d8d8"/></svg></div>
      <div class="ta"><svg class="ti" viewBox="0 0 24 24"><path d="M21 6C15 1 5 3 4 11s7 11 12 8 3-10-2-10-6 6-2 7" fill="none" stroke="#ccc" stroke-width="1.500"/></svg></div>
      <div class="ta"><span class="edge">e</span></div>
      <div class="ta"><svg class="ti" viewBox="0 0 24 24"><path d="M3 7h18v16H3z" fill="#fff"/><path d="M8 7V4c0-4 8-4 8 0v3" fill="none" stroke="#fff" stroke-width="1.500"/><path d="M8 11h3.500v3.500H8zM12.500 11H16v3.500h-3.500zM8 15.500h3.500V19H8zM12.500 15.500H16V19h-3.500z" fill="#111"/></svg></div>
      <div class="ta"><svg class="ti" viewBox="0 0 24 24"><path d="M2 4h20v17H2z" fill="#f3d673"/><path d="M2 4h8v3H2z" fill="#e8c050"/><path d="M8 13h8v8H8z" fill="#3fa8e8"/><path d="M11 13h2v3h-2z" fill="#fff"/></svg></div>
      <div class="ta run"><svg class="ti" viewBox="0 0 24 24"><path d="M22 3C12 0 3 5 3 13c0 7 8 10 13 7s5-8 1-10-8 0-8 3" fill="none" stroke="#1e9aee" stroke-width="4"/></svg></div>
      <div class="ta run"><svg class="ti" viewBox="0 0 24 24"><circle cx="12" cy="13" r="10" fill="#78c850" stroke="#fff"/><path d="M6 13h12M7 9h10M7 17h10" stroke="#fff" stroke-width="1.500"/><path d="M18 1c3 1 4 3 3 6" fill="none" stroke="#78c850" stroke-width="2"/></svg></div>
      <div class="ta run act"><svg class="ti" viewBox="0 0 24 24"><rect width="24" height="24" rx="4" fill="#1296f0"/><path d="M12 4v16M5 10c0 6 4 7 7 7s7-1 7-7M8 8h8" fill="none" stroke="#fff" stroke-width="2"/></svg></div>
      <div class="ta run"><svg class="ti" viewBox="0 0 24 24"><rect width="24" height="24" rx="2" fill="#f0a820"/><path d="M4 6l11-2 4 16-11 2z" fill="#fbf4dc"/><path d="M7 9l8-2M8 12l8-2M8 15l5-1" stroke="#a86820"/><path d="M22 1L14 14l-2 3 3-2 9-12z" fill="#d04818"/></svg></div>
    </div>
    <div class="cpu"><span>51%</span><span>CPU使用</span></div>
    <div class="tray">
      <svg class="i chevup"><path d="M2 11l6-6 6 6" fill="none" stroke="#fff"/></svg>
      <svg class="i"><path d="M1 5h2v8h12V5H3M4 2v3M8 2v3" fill="none" stroke="#fff"/><rect x="5" y="7" width="8" height="4" fill="#fff"/></svg>
      <svg class="i"><path d="M1 14a13 13 0 0 1 13-13M4 14a10 10 0 0 1 10-10M7 14a7 7 0 0 1 7-7M10 14a4 4 0 0 1 4-4" fill="none" stroke="#ddd"/></svg>
      <svg class="i"><path d="M1 6h3l4-4v12l-4-4H1z" fill="none" stroke="#fff"/><path d="M10 5c2 2 2 4 0 6M12 3c3 3 3 7 0 10" fill="none" stroke="#ccc"/></svg>
      <svg class="kbd" viewBox="0 0 24 14"><rect x=".5" y=".5" width="23" height="13" fill="none" stroke="#fff"/><path d="M3 4h18M3 7h18M6 10h12" stroke="#fff" stroke-dasharray="1.500 1"/></svg>
      <span class="tz">中</span>
      <span class="ts">S</span>
    </div>
    <div class="clock"><span>13:21</span><span>2017/9/6</span></div>
    <div class="notif"><svg class="i"><path d="M1 1h14v11H8l-2 3v-3H1z" fill="#fff"/><path d="M3 4h10M3 7h10" stroke="#000"/></svg><em class="nb">4</em></div>
  </div>
</div>
</body>
</html>
```
FILE: styles.css
```css
*{box-sizing:border-box}
html,body{margin:0;height:768px;overflow:hidden}
body{font:12px/16px "Noto Sans CJK SC","Liberation Sans",sans-serif;color:#000;background:#f0f0f0}
.defs{position:absolute;width:0;height:0}
.tiny{font:5px "Liberation Mono",monospace;text-anchor:middle;fill:#333}
.app{width:1366px;height:768px;display:flex;flex-direction:column}
i,em{font-style:normal}
b{font-weight:400}
.m{font-family:"DejaVu Sans Mono",monospace;font-size:10px}
.i{width:16px;height:16px;flex:none;display:block}

/* title */
.title{height:23px;background:#fff;display:flex;align-items:center;padding-left:6px;position:relative;flex:none}
.appicon{width:14px;height:14px}
.ttxt{margin-left:3px;font-size:12.600px;white-space:nowrap;color:#111}
.badge{position:absolute;left:382px;top:-22px;width:40px;height:40px;border-radius:50%;background:#36b34a;color:#fff;text-align:center;padding-top:21px;line-height:14px;box-shadow:0 1px 3px #777;border:1px solid #bbb}
.win{margin-left:auto;display:flex;gap:29px;padding-right:18px}
.wi{width:16px;height:16px;display:block}

/* menu */
.menu{height:27px;flex:none;display:flex;align-items:center;gap:10px;padding-left:6px;background:#f5f5f5;white-space:nowrap}
.g3{margin-left:3px}
.g2{margin-left:2px}
.g4{margin-left:4px}
.nc{margin-left:-2px}
.gxe{margin-left:-8px}
.zjd{margin-left:-4px}
.it{display:flex;align-items:center;gap:4px;white-space:nowrap;height:24px}
.news{width:187px;height:26px;margin:0 1px 0 -3px;background:#fbfbfb;color:#5a3010;padding:5px 0 0 29px}
.acct{margin-left:-5px;font-size:12.600px}
.more{font-size:13px;font-weight:700;line-height:12px;padding-bottom:5px}
.end{margin-left:auto;padding-right:3px}
.ar{flex:none;width:0;height:0;border:3px solid transparent;border-top:3px solid #111;border-bottom:0;display:block}
.ar.ga{border-top-color:#888}
.ar.tight{margin-left:-4px}
.ar.tight2{margin-left:-5px}

/* toolbars */
.row1{height:34px;flex:none;padding:4px 0;display:flex;gap:1px}
.blk{display:flex;align-items:center;gap:7px;background:#f8f8f8;height:100%;white-space:nowrap}
.sep{flex:none;width:1px;height:20px;background:#c8c8c8}
.dis{color:#999}
.b1{width:152px;padding-left:4px;gap:8px}
.b2{width:552px;padding-left:4px}
.end2{margin-left:auto;padding-right:4px}
.b3{flex:1;padding-left:1px;gap:7px}
.b3 .ar{margin-left:-1px}
.b3 .on{margin-left:-1px}
.b3 .on+.it{margin-left:-5px}
.b3 .sep{margin-right:-2px}
.b3 .tight{margin-left:-4px}
.b3 .tight+.sep{margin:0 -4px 0 -3px}
.wh{background:#fff}
.sig{width:16px;font-weight:700;font-size:14px;text-align:center;font-family:"Liberation Serif",serif}
.on{background:#dcebf8;border:1px solid #2b88d8;padding:0 3px 0 2px;height:24px}
.on2{background:#e6f0fa;border:1px solid #1678d0}
.main{height:622px;flex:none;display:flex}

/* left */
.left{width:214px;flex:none;display:flex;flex-direction:column;padding-right:5px}
.ltitle{height:15px;background:#0c50d8;color:#fff;display:flex;justify-content:space-between;line-height:15px;font-size:13px;margin-bottom:1px}
.lctl{padding-right:5px;font-size:12px;display:flex;align-items:center;gap:10px}
.pin{width:11px;height:12px;display:block}
.lbtn{height:22px;margin:0 0 1px 1px;background:#f2f2f2;border:1px solid #a8a8a8;text-align:center;line-height:20px;flex:none;font-size:12px}
.lb2{height:21px;margin-bottom:1px}
.tree{height:514px;flex:none;margin:0 2px 1px 2px;background:#fff;border:2px solid #a8a8a8;border-top-width:1px;display:flex;flex-wrap:wrap;overflow:hidden;align-content:flex-start;position:relative;font-size:13px}
.expand{width:100%;height:27px;display:flex;align-items:center;gap:7px;padding-left:3px;background:#fff}
.pmi{width:16px;height:14px;display:block}
.tlist{width:186px;height:484px;overflow:hidden;background-image:repeating-linear-gradient(#888 0 1px,transparent 1px 2px),repeating-linear-gradient(#888 0 1px,transparent 1px 2px);background-size:1px 100%,1px 100%;background-position:11px 0,30px 0;background-repeat:no-repeat}
.n,.g{height:16px;display:flex;align-items:center;white-space:nowrap;font-size:12px}
.n{padding-left:31px}
.ln{width:12px;height:0;border-top:1px dotted #777;flex:none}
.n .i{margin-right:3px}
.g{padding-left:6px;position:relative;background:#fff}
.g .i{margin-right:5px}
.chev{width:8px;height:8px;border:solid #555;border-width:0 0 1.500px 1.500px;transform:translateY(-2px) rotate(-45deg) scale(.8);flex:none;margin-right:4px}
.chev.none{visibility:hidden}
.ln2{width:3px;border-top:1px dotted #777;flex:none}
.sel{background:linear-gradient(#d8d8d8,#d8d8d8) no-repeat 39px 0/89px 16px}
.n .tbl,.g .tbl{margin:0 1px 0 1px}
.newb{font:700 8px/9px "Liberation Sans",sans-serif;background:#fc0;color:#000;padding:0 1px;align-self:flex-start}
.tscroll{width:16px;height:484px;display:flex;flex-direction:column;background:#f0f0f0;align-items:center}
.sa{height:16px;line-height:20px;font-size:14px;color:#555;font-weight:700;flex:none}
.tgap{height:198px;flex:none}
.tthumb{width:100%;height:245px;background:#c8c8c8;flex:none}

/* right */
.rc{width:1152px;flex:none;display:flex;flex-direction:column}
.tr{display:flex;flex:none;padding-left:1px}
.r2{height:27px;padding-bottom:2px}
.bk2{width:790px;padding-left:4px;gap:7px}
.bk2 .dots{margin-right:-2px}
.bk2 .first{gap:2px}
.bk2 .sep{margin-right:-2px}
.dots{flex:none;width:3px;height:20px;background:repeating-linear-gradient(#aaa 0 2px,transparent 2px 4px);margin-right:4px}
.r3{height:29px;padding-bottom:3px;padding-left:3px;justify-content:flex-start}
.bk3{width:566px;padding-left:7px;gap:4px}
.bk3 .sep{margin:0 -1px 0 2px}
.bk3 .pk{margin-left:2px}
.cb{background:#fff;height:22px;display:flex;align-items:center;justify-content:space-between;padding:0 3px 0 1px;font-size:12.500px;flex:none}
.c1{width:56px}.c2{width:68px}.c3{width:69px}.c4{width:69px}
.c5{width:52px;justify-content:flex-end;padding-right:1px;margin-left:-2px}.c6{width:58px;padding-right:5px}
.bk4{width:426px;margin-left:72px;padding-left:4px;gap:7px}
.bk4 .dots{margin-right:-2px}
.bk4 .ar{margin-left:-1px}
.split{display:flex;height:24px;border:1px solid #1678d0;background:#b6d8f4;flex:none;margin-left:-3px}
.split .it{height:22px;padding:0 3px;gap:1px}
.dimi{width:18px}
.sp-ar{border-left:1px solid #1678d0;width:12px;display:flex;align-items:center;justify-content:center}
.sp-ar .ar{margin-left:0}
.r4{height:28px;padding-left:3px;padding-bottom:2px}
.bk5{width:486px;padding-left:4px;gap:7px}
.bk5 .dots{margin-right:-7px}
.bk5 .sep{margin-right:-2px}
.bk6{width:30px;margin-left:2px;padding-left:2px}
.wbx{width:18px;height:20px;background:#fff}
.cv{height:262px;flex:none;position:relative;background:#000;overflow:hidden}
.scene{display:block;width:1152px;height:262px}
.scene path,.scene circle{fill:none}
.scene .wh path{stroke:#fff;stroke-width:2}
.scene .gr path{stroke:#a89b94;stroke-width:1.800}
.scene .thin path,.scene .thin circle{stroke:#787878;stroke-width:.8}
.scene .red path{stroke:#f00;stroke-width:1}
.scene .ax-b{stroke:#0a78e8;stroke-width:4}
.scene .ax-g{stroke:#0f0;stroke-width:4}
.scene .ax-gh{fill:#0f0}
.scene .ax-r{stroke:#f00;stroke-width:4}
.scene .ax-rh{fill:#f00}
.scene .lab-g{stroke:#0c0}
.scene .lab-r{stroke:#f00}
.scene .circ{stroke:#0a7a0a}
.lbl-a{fill:#ddd;font:11px "Liberation Sans",sans-serif;text-anchor:middle}
.ctl{position:absolute;left:9px;top:2px;width:168px;height:179px;background:#fff;border:1px solid #555;display:flex;flex-direction:column;padding:1px}
.ctl-t{height:28px;color:#999;padding:5px 0 0 7px;font-size:12px}
.ctl-b{flex:1;border:2px solid #888;padding:1px 0 0 2px}
.ck{display:flex;align-items:center;gap:3px;height:12px;line-height:12px;font-size:12px}
.box{width:11px;height:11px;border:1px solid #888;background:#fff;position:relative;flex:none}
.box::after{content:"";position:absolute;left:2px;top:1px;width:6px;height:3px;border:solid #444;border-width:0 0 1.500px 1.500px;transform:rotate(-45deg)}
.r5{height:33px;padding:0 0 6px 1px;gap:2px}
.bk7{width:209px;padding-left:4px;gap:0}
.bk7 .dots{margin-right:2px}
.bk7>.it:nth-of-type(2){margin-left:4px;gap:3px}
.bk7>.it:nth-of-type(3){margin-left:1px}
.bk7 .on{height:24px;padding:0 3px 0 2px}
.bk8{width:263px;padding-left:4px;gap:4px}
.bk8 .dots{margin-right:0}
.bk8 .pp{gap:5px;padding:0 1px 0 2px;margin:0 -4px 0 0}
.bk8 .pp+.it:not(.pp){margin-left:4px}
.bk8 .lastc{margin-left:3px}
.bk9{flex:1;gap:5px;padding-left:8px;background:#f0f0f0}
.bk9 .sep{margin-right:-3px}
.dtx{color:#999;margin-right:-3px}
.dy{margin-left:4px}
.sx{margin-left:2px}
.spin{width:55px;height:22px;border:1px solid #888;background:#fff;display:flex;align-items:center;justify-content:flex-end;font-size:12px;gap:6px;flex:none}
.s2{width:62px;margin-left:2px}
.sb{width:12px;height:100%;display:flex;flex-direction:column;justify-content:center;gap:3px;align-items:center}
.sb i{width:0;height:0;border:3px solid transparent;display:block}
.sb i:first-child{border-bottom:3px solid #333;border-top:0}
.sb i:last-child{border-top:3px solid #333;border-bottom:0}
.chk{width:11px;height:11px;border:1px solid #777;background:#fff;margin:0 3px 0 0;flex:none}
.r6{height:26px;padding:0 0 2px 0}
.closex{width:12px;height:12px;flex:none}
.bk10{flex:1;padding-left:2px;gap:7px;margin-left:1px}
.bk10>.sep:nth-of-type(2){margin-right:-2px}
.bk10 .lb{margin-left:-1px;gap:3px}
.bk10 .ot{margin-left:2px}
.dock{height:217px;display:flex;flex:none}
.grip{width:13px;flex:none;background-image:radial-gradient(#bbb 1px,transparent 1.200px);background-size:4px 4px}
.gridwrap{width:1139px;flex:none;display:flex;flex-direction:column}
.gridrow{display:flex;height:198px;flex:none;border-top:1px solid #aaa}
.tblclip{width:1119px;height:197px;overflow:hidden;background:#fff;flex:none}
.grid{border-collapse:collapse;table-layout:fixed;width:1119px;font-size:12px;line-height:14px}
.k0{width:33px}.k1{width:73px}.k2{width:57px}.k3{width:35px}.k4{width:33px}.k5{width:201px}.k6{width:167px}.k7{width:155px}.k8{width:61px}.k9{width:38px}.k10{width:39px}.k11{width:49px}.k12{width:61px}.k13{width:61px}.k14{width:56px}
.grid thead th{height:19px;background:#fafafa;font-weight:400;border:1px solid #bcbcbc;border-top:0;padding:0;white-space:nowrap;overflow:hidden}
.grid th.act{background:linear-gradient(#fbdca0,#f6c265);color:#5a0a7a}
.grid td{border:1px solid #bcbcbc;background:#ccffd6;padding:0 2px;white-space:nowrap;overflow:hidden}
.grid td.m{font-size:10px}
.tall{height:61px}
.mid{height:29px}
.rh{background:linear-gradient(90deg,#fff,#ececec);font-weight:400;border:1px solid #bcbcbc;font-family:"DejaVu Sans Mono",monospace;font-size:11px}
.rh.cur{background:#ffd68a;color:#5a0a7a}
.grid td.sel1{background:#aee8d4}
.grid td.bl{border-left:2px solid #000}
.grid td.ctr{text-align:center}
.grid td.sh{padding:0}
.shape{display:block;width:201px}
.tall .shape{height:60px}
.mid .shape{height:28px}
.rb{fill:none;stroke:#000;stroke-width:2}
.sv,.sh2{font:10.500px "Liberation Sans",sans-serif;fill:#000}
.sr{font:11px "Liberation Sans",sans-serif;fill:#f00;text-anchor:middle}
.vs{flex:1;display:flex;flex-direction:column;background:#f0f0f0;align-items:center;width:17px}
.vs .sa{height:18px}
.vthumb{height:53px;width:100%;background:#c8c8c8;flex:none}
.vgap{flex:1}
.hs{height:16px;flex:none;width:1119px;display:flex;background:#f0f0f0;align-items:center}
.hsa{width:18px;text-align:center;font-weight:700;font-size:14px;color:#555;line-height:16px}
.hthumb{width:720px;height:16px;background:#c8c8c8}

/* status */
.status{height:22px;flex:none;display:flex;gap:2px;padding:2px 0 1px;position:relative;background:#f0f0f0;border-top:1px solid #a8a8a8}
.st{background:#fbfbfb;border:1px solid #ddd;height:19px;line-height:17px;padding-left:2px;font-size:12px;white-space:nowrap;flex:none}
.s-a{width:148px;font-family:"DejaVu Sans Mono",monospace;font-size:10px}
.s-b{width:78px}.s-c{width:100px}.s-d{width:47px;font-family:"DejaVu Sans Mono",monospace;font-size:10px}
.s-e{flex:1}
.ime{position:absolute;right:0;top:-4px;height:28px;display:flex;align-items:center;gap:7px;padding-right:4px}
.sogou{width:24px;height:24px;background:#f0501e;color:#fff;font:700 22px/24px "Liberation Sans",sans-serif;text-align:center;transform:rotate(-8deg);border-radius:3px;margin-right:0}
.ime-z{color:#1a70c0;font-weight:700;font-size:14px}
.ime-p{color:#1a70c0;font-weight:700;font-size:12px}

/* taskbar */
.taskbar{height:40px;flex:none;background:#04111b;display:flex;color:#fff;position:relative}
.start{width:48px;background:#000;display:flex;align-items:center;justify-content:center}
.win10{width:16px;height:16px}
.search{width:344px;background:#333;display:flex;align-items:center;padding-left:10px;color:#8c8c8c;font-size:13px}
.cortana{width:20px;height:20px;border:3px solid #ddd;border-radius:50%;margin-right:6px;flex:none}
.stxt{font-size:14px}
.mic{margin-left:auto;margin-right:13px}
.tapps{display:flex;width:448px;padding-left:2px;flex:none}
.ta{width:49.500px;height:40px;display:flex;align-items:center;justify-content:center}
.ta.run{background:linear-gradient(#66a6e6,#66a6e6) no-repeat center bottom/40px 2px}
.ta.run.act{background:linear-gradient(#66a6e6,#66a6e6) no-repeat center bottom/100% 2px,#333c44}
.ti{width:24px;height:24px}
.edge{font:700 34px/36px "Liberation Sans",sans-serif;color:#1479d8;margin-left:5px}
.cpu{width:77px;display:flex;flex-direction:column;align-items:center;margin-left:138px;padding-top:3px;line-height:17px;font-size:12px;flex:none}
.tray{display:flex;align-items:center;gap:9px;margin-left:2px;width:178px;flex:none}
.kbd{width:24px;height:14px;margin-left:-3px}
.tz{font-size:14px;margin-left:-1px}
.ts{width:14px;height:15px;background:#f0501e;color:#fff;font:700 13px/15px "Liberation Sans",sans-serif;text-align:center;border-radius:2px;margin-left:6px}
.clock{width:70px;display:flex;flex-direction:column;align-items:center;padding-top:3px;line-height:17px;font-size:12px;flex:none}
.notif{position:relative;margin-left:22px;padding-top:11px}
.nb{position:absolute;left:8px;top:14px;width:16px;height:16px;border-radius:50%;background:#333;border:1px solid #888;font-size:11px;line-height:14px;text-align:center}
.clip{overflow:hidden}
```
